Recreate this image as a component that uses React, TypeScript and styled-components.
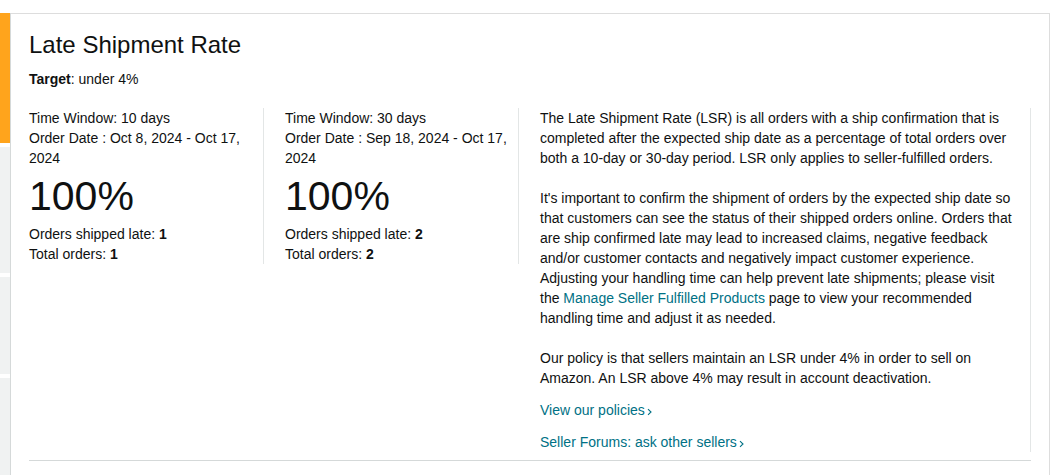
import React from "react";
import styled, { createGlobalStyle } from "styled-components";

const GlobalStyle = createGlobalStyle`
  html, body { margin: 0; padding: 0; background: #ffffff; }
  body {
    font-family: "Liberation Sans", Arial, sans-serif;
    color: #0f1111;
    font-size: 14px;
    line-height: 20px;
  }
`;

const Page = styled.div`
  display: flex;
  padding-top: 13px;
  min-height: 100vh;
  box-sizing: border-box;
`;

const Sidebar = styled.nav`
  width: 10px;
  flex: 0 0 10px;
  display: flex;
  flex-direction: column;
  gap: 4px;
  border-right: 1px solid #d5d9d9;
  background: #ffffff;
`;

const Tab = styled.div<{ $active?: boolean; $h?: number }>`
  background: ${(p) => (p.$active ? "#ffa41c" : "#f0f2f2")};
  height: ${(p) => (p.$h ? `${p.$h}px` : "auto")};
  flex: ${(p) => (p.$h ? "0 0 auto" : "1")};
`;

const Panel = styled.section`
  flex: 0 0 1039px;
  box-sizing: border-box;
  border-top: 1px solid #dddddd;
  border-right: 1px solid #dddddd;
  padding: 15px 18px 0;
`;

const Title = styled.h1`
  margin: 0;
  font-size: 24px;
  line-height: 32px;
  font-weight: 400;
`;

const Target = styled.div`
  margin-top: 8px;
  b { font-weight: 700; }
`;

const Grid = styled.div`
  display: grid;
  grid-template-columns: 235px 255px 1fr;
  margin-top: 19px;
  align-items: start;
`;

const Column = styled.div<{ $first?: boolean; $wide?: boolean }>`
  border-right: 1px solid #e3e6e6;
  padding: 0 ${(p) => (p.$wide ? 15 : 8)}px 0 ${(p) => (p.$first ? 0 : 21)}px;
  b { font-weight: 700; }
`;

const Line = styled.div``;

const BigValue = styled.div`
  font-size: 41px;
  line-height: 56px;
`;

const Para = styled.p<{ $last?: boolean }>`
  margin: 0 0 ${(p) => (p.$last ? 12 : 20)}px;
`;

const InlineLink = styled.a`
  color: #007185;
  text-decoration: none;
`;

const ArrowLink = styled.a<{ $gap?: number }>`
  display: block;
  width: max-content;
  color: #007185;
  text-decoration: none;
  margin-top: ${(p) => p.$gap ?? 0}px;
  svg { margin-left: 2px; vertical-align: -1px; }
`;

const Rule = styled.hr`
  margin: 8px 0 0;
  border: 0;
  border-top: 1px solid #d5d9d9;
`;

const Chevron = () => (
  <svg width="5" height="8" viewBox="0 0 5 8" aria-hidden="true">
    <polyline points="1,1.2 4,4 1,6.8" fill="none" stroke="#007185" strokeWidth="1.1" />
  </svg>
);

const windows = [
  { days: 10, range: "Oct 8, 2024 - Oct 17, 2024", late: 1, total: 1 },
  { days: 30, range: "Sep 18, 2024 - Oct 17, 2024", late: 2, total: 2 },
];

export default function App() {
  return (
    <>
      <GlobalStyle />
      <Page>
        <Sidebar>
          <Tab $active $h={130} />
          <Tab $h={126} />
          <Tab $h={97} />
          <Tab />
        </Sidebar>
        <Panel>
          <Title>Late Shipment Rate</Title>
          <Target>
            <b>Target</b>: under 4%
          </Target>
          <Grid>
            {windows.map((w, i) => (
              <Column key={w.days} $first={i === 0}>
                <Line>Time Window: {w.days} days</Line>
                <Line>Order Date : {w.range}</Line>
                <BigValue>100%</BigValue>
                <Line>
                  Orders shipped late: <b>{w.late}</b>
                </Line>
                <Line>
                  Total orders: <b>{w.total}</b>
                </Line>
              </Column>
            ))}
            <Column $wide>
              <Para>
                The Late Shipment Rate (LSR) is all orders with a ship confirmation that is completed after the
                expected ship date as a percentage of total orders over both a 10-day or 30-day period. LSR only
                applies to seller-fulfilled orders.
              </Para>
              <Para>
                It's important to confirm the shipment of orders by the expected ship date so that customers can
                see the status of their shipped orders online. Orders that are ship confirmed late may lead to
                increased claims, negative feedback and/or customer contacts and negatively impact customer
                experience. Adjusting your handling time can help prevent late shipments; please visit the{" "}
                <InlineLink href="#">Manage Seller Fulfilled Products</InlineLink> page to view your recommended
                handling time and adjust it as needed.
              </Para>
              <Para $last>
                Our policy is that sellers maintain an LSR under 4% in order to sell on Amazon. An LSR above 4% may
                result in account deactivation.
              </Para>
              <ArrowLink href="#">
                View our policies
                <Chevron />
              </ArrowLink>
              <ArrowLink href="#" $gap={12}>
                Seller Forums: ask other sellers
                <Chevron />
              </ArrowLink>
            </Column>
          </Grid>
          <Rule />
        </Panel>
      </Page>
    </>
  );
}
